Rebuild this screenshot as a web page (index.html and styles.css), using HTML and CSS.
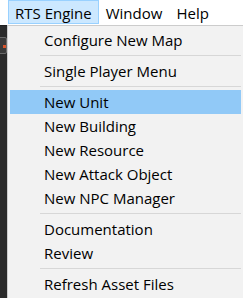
FILE: index.html
```html
<!DOCTYPE html>
<html>
  <head>
    <meta charset="UTF-8" />
    <title>RTS Engine Menu</title>
    <link rel="stylesheet" href="styles.css">
  </head>
  <body>
    <div class="menubar">
      <div class="menubar-item active">RTS Engine</div>
      <div class="menubar-item">Window</div>
      <div class="menubar-item">Help</div>
    </div>

    <div class="workspace">
      <div class="dock">
        <div class="dock-icon"><span class="dot"></span></div>
      </div>

      <div class="dropdown">
        <div class="menu-item">Configure New Map</div>
        <div class="separator"></div>
        <div class="menu-item">Single Player Menu</div>
        <div class="separator"></div>
        <div class="menu-item hover">New Unit</div>
        <div class="menu-item">New Building</div>
        <div class="menu-item">New Resource</div>
        <div class="menu-item">New Attack Object</div>
        <div class="menu-item">New NPC Manager</div>
        <div class="separator"></div>
        <div class="menu-item">Documentation</div>
        <div class="menu-item">Review</div>
        <div class="separator"></div>
        <div class="menu-item">Refresh Asset Files</div>
      </div>
    </div>
  </body>
</html>
```

FILE: styles.css
```css
body {
  font-family: "Open Sans", "Noto Sans", Arial, sans-serif;
  font-size: 15px;
  margin: 0;
  width: 243px;
  height: 298px;
  overflow: hidden;
  background: #282828;
  color: #000;
}

.menubar {
  display: flex;
  height: 25px;
  padding-left: 8px;
  background: #fff;
}

.menubar-item {
  height: 24px;
  box-sizing: border-box;
  padding: 1px 7px 0;
  line-height: 22px;
  border: 1px solid transparent;
  border-left-width: 0;
  border-right-width: 0;
  white-space: nowrap;
}

.menubar-item.active {
  padding: 1px 6px 0;
  background: #cce8ff;
  border: 1px solid #99d1ff;
}

.workspace {
  display: flex;
  height: 273px;
}

.dock {
  width: 7px;
  flex-shrink: 0;
  background: #2b2b2b;
  border-top: 1px solid #1f1f1f;
  overflow: hidden;
}

.dock-icon {
  width: 9px;
  height: 15px;
  margin: 11px 0 0 -4px;
  border: 1px solid #6a6a6a;
  border-radius: 2px;
  background: #3a3a3a;
  position: relative;
}

.dot {
  position: absolute;
  left: 6px;
  top: 7px;
  width: 3px;
  height: 3px;
  background: #d9542b;
}

.dropdown {
  flex: 1;
  background: #f2f2f2;
  border-top: 1px solid #cccccc;
  border-left: 1px solid #cccccc;
  padding: 2px 2px 0 2px;
  overflow: hidden;
}

.menu-item {
  height: 24px;
  line-height: 24px;
  padding-left: 34px;
  white-space: nowrap;
}

.menu-item.hover {
  background: #91c9f7;
}

.separator {
  height: 7px;
  box-sizing: border-box;
  padding-top: 3px;
  margin-left: 30px;
}

.separator::before {
  content: "";
  display: block;
  height: 1px;
  background: #d7d7d7;
}
```
